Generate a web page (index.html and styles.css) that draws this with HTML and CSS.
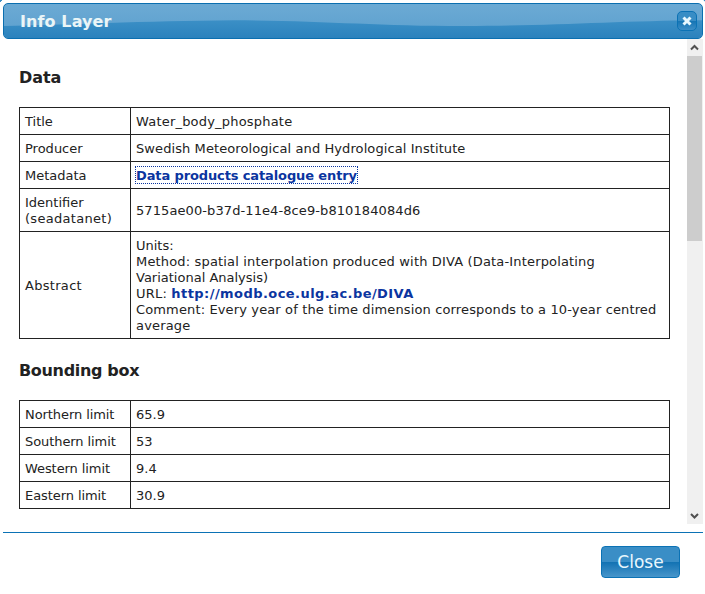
FILE: index.html
```html
<!DOCTYPE html>
<html lang="en">
<head>
<meta charset="utf-8">
<title>Info Layer</title>
<link rel="stylesheet" href="styles.css">
</head>
<body>
<div class="dialog">
  <header class="titlebar">
    <svg class="wave" viewBox="0 0 698 34" preserveAspectRatio="none" aria-hidden="true">
      <defs>
        <linearGradient id="low" x1="0" y1="0" x2="0" y2="1"><stop offset="0" stop-color="#3b8fc6"/><stop offset="1" stop-color="#2b82bd"/></linearGradient>
      </defs>
      <path fill="url(#low)" d="M0 22 C60 21 140 17 230 16.3 C320 16.5 370 22 460 22 C550 22 610 17 698 16.3 V34 H0 Z"/>
    </svg>
    <h1 class="title">Info Layer</h1>
    <button class="dismiss" aria-label="Close dialog">
      <svg width="10" height="10" viewBox="0 0 10 10"><path d="M1.5 1.5 L8.5 8.5 M8.5 1.5 L1.5 8.5" stroke="#e8f8ff" stroke-width="3"/></svg>
    </button>
  </header>
  <div class="body">
    <main class="content">
      <h2>Data</h2>
      <table>
        <tr><td class="key">Title</td><td class="loose">Water_body_phosphate</td></tr>
        <tr><td>Producer</td><td class="slight">Swedish Meteorological and Hydrological Institute</td></tr>
        <tr><td>Metadata</td><td><a class="focused">Data products catalogue entry</a></td></tr>
        <tr><td>Identifier <span class="looser">(seadatanet)</span></td><td class="slight">5715ae00-b37d-11e4-8ce9-b810184084d6</td></tr>
        <tr><td class="looser">Abstract</td><td>Units:<br><span class="medium">Method: spatial interpolation produced with DIVA (Data-Interpolating</span><br>Variational Analysis)<br><span class="loose">URL: </span><a class="url">http://modb.oce.ulg.ac.be/DIVA</a><br><span class="line">Comment: Every year of the time dimension corresponds to a 10-year centred</span><br><span class="medium">average</span></td></tr>
      </table>
      <h2 class="tight">Bounding box</h2>
      <table>
        <tr><td class="key snug">Northern limit</td><td>65.9</td></tr>
        <tr><td class="snug">Southern limit</td><td>53</td></tr>
        <tr><td class="snug">Western limit</td><td>9.4</td></tr>
        <tr><td class="snug">Eastern limit</td><td>30.9</td></tr>
      </table>
    </main>
    <div class="scrollbar">
      <svg class="arrow" width="15" height="17" viewBox="0 0 15 17"><path d="M4 10.5 L7.5 7 L11 10.5" fill="none" stroke="#505050" stroke-width="2"/></svg>
      <div class="thumb"></div>
      <svg class="arrow" width="15" height="17" viewBox="0 0 15 17"><path d="M4 7 L7.5 10.5 L11 7" fill="none" stroke="#505050" stroke-width="2"/></svg>
    </div>
  </div>
  <footer class="buttons"><button class="close">Close</button></footer>
</div>
</body>
</html>
```
FILE: styles.css
```css
* { box-sizing: border-box; }
body {
  margin: 0;
  height: 594px;
  overflow: hidden;
  background: #fff;
  color: #222;
  font: 13px/16px Verdana, "DejaVu Sans", sans-serif;
}
.dialog {
  padding: 3px 2px 0 3px;
  background:
    linear-gradient(135deg, #3a8ec6 1.5px, transparent 2px) 0 0 / 3px 3px no-repeat,
    linear-gradient(225deg, #3a8ec6 1px, transparent 1.5px) 100% 0 / 3px 3px no-repeat;
}
.titlebar {
  position: relative;
  display: flex;
  align-items: center;
  justify-content: space-between;
  height: 36px;
  padding: 0 5px 0 16px;
  border: 1px solid #0b6fb0;
  border-radius: 5px;
  background: linear-gradient(#6caad4, #5a9fce);
  overflow: hidden;
}
.wave { position: absolute; inset: 0; width: 100%; height: 100%; }
.title {
  position: relative;
  margin: 0;
  padding-top: 2px;
  color: #eaf5f7;
  font-size: 16px;
  line-height: 20px;
  letter-spacing: 0.1px;
}
.dismiss {
  position: relative;
  display: flex;
  align-items: center;
  justify-content: center;
  width: 20px;
  height: 20px;
  padding: 0;
  border: 1px solid #0b72b5;
  border-radius: 5px;
  background: linear-gradient(#388dc5 50%, #1474b4 50%, #3d8ec6);
}
.body { display: flex; justify-content: space-between; height: 485px; }
.content { width: 667px; padding: 0 0 0 16px; }
h2 {
  margin: 29px 0 19px;
  font-size: 16px;
  line-height: 20px;
  letter-spacing: -0.1px;
}
table + h2 { margin-top: 22px; }
h2.tight { letter-spacing: -0.33px; }
table {
  width: 651px;
  table-layout: fixed;
  border-collapse: collapse;
}
td { padding: 6px 5px 4px; border: 1px solid #222; vertical-align: middle; }
.key { width: 111px; }
.snug { letter-spacing: -0.08px; }
.slight { letter-spacing: 0.09px; }
.line { letter-spacing: 0.135px; }
.medium { letter-spacing: 0.16px; }
.loose { letter-spacing: 0.2px; }
.looser { letter-spacing: 0.3px; }
a { color: #0b35a0; font-weight: bold; }
.url { letter-spacing: 0.44px; }
.focused { padding-top: 1px; outline: 1px dotted #0b35a0; letter-spacing: -0.12px; }
.scrollbar {
  display: flex;
  flex-direction: column;
  width: 16px;
  background: #f0f0f0;
}
.arrow { flex: none; }
.thumb { width: 15px; height: 185px; margin-bottom: auto; background: #cdcdcd; }
.buttons {
  display: flex;
  justify-content: flex-end;
  margin-top: 8px;
  padding: 13px 23px 0 0;
  border-top: 1px solid #0b72b5;
}
.close {
  width: 79px;
  height: 32px;
  padding: 0;
  border: 1px solid #0b72b5;
  border-radius: 4px;
  background: linear-gradient(#3a8ec6 50%, #1272b3 50%, #4795ca);
  color: #e9f7fd;
  font: 17px/20px Verdana, "DejaVu Sans", sans-serif;
}
```
